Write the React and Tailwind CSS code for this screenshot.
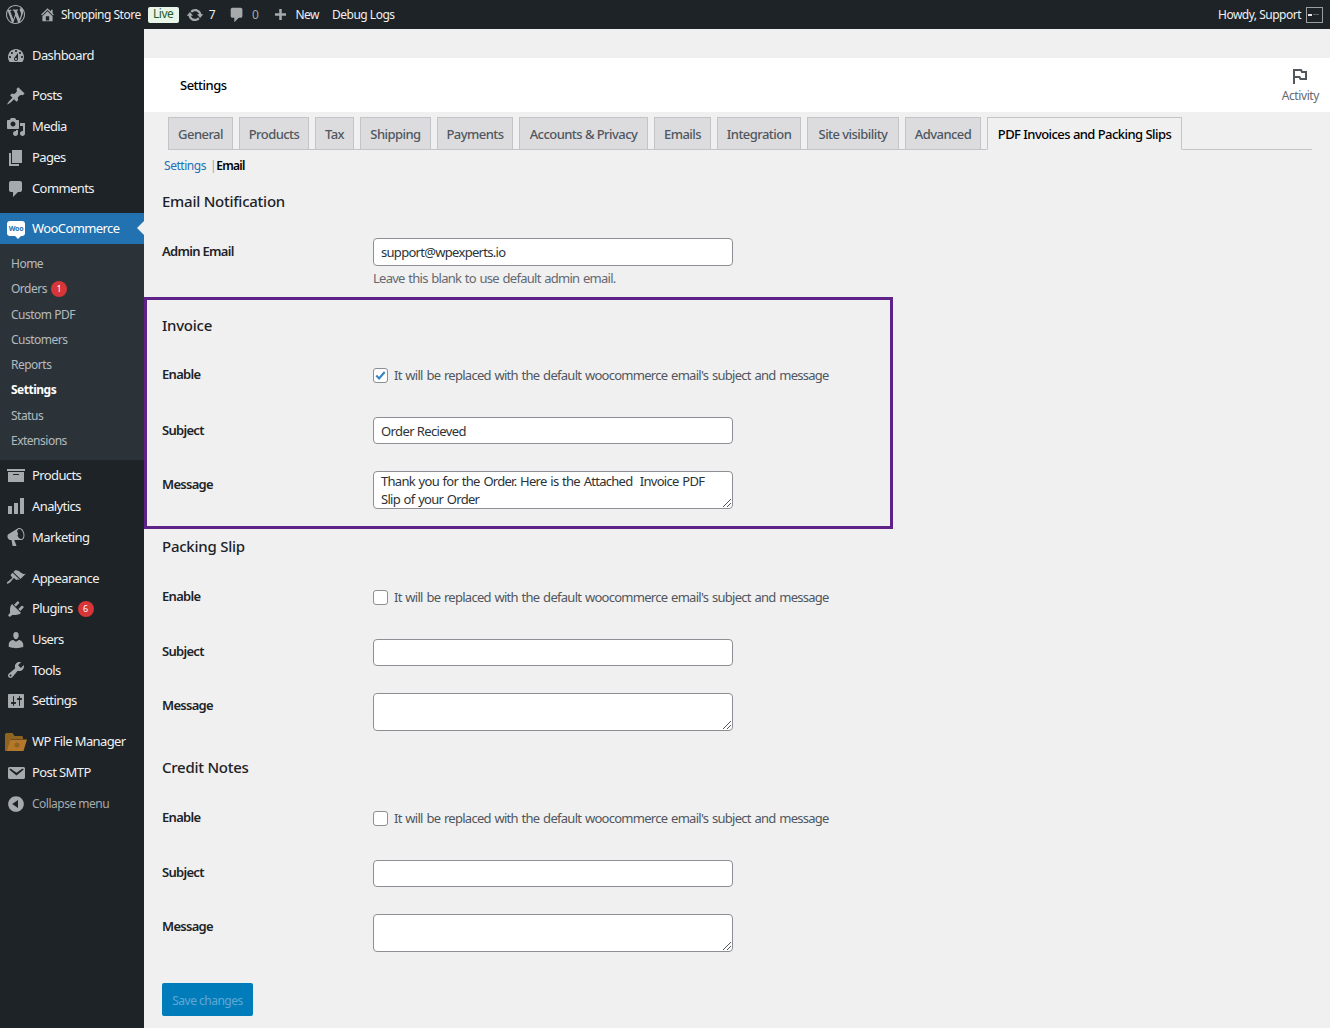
import React from 'react';

const PATHS = {
  wp: 'M20 10c0-5.51-4.49-10-10-10C4.48 0 0 4.49 0 10c0 5.52 4.48 10 10 10 5.51 0 10-4.48 10-10zM7.78 15.37L4.37 6.22c.55-.02 1.17-.08 1.17-.08.5-.06.44-1.13-.06-1.11 0 0-1.45.11-2.37.11-.18 0-.37 0-.58-.01C4.12 2.69 6.87 1.11 10 1.11c2.33 0 4.45.87 6.05 2.34-.68-.11-1.65.39-1.65 1.58 0 .74.45 1.36.9 2.1.35.61.55 1.36.55 2.46 0 1.49-1.4 5-1.4 5l-3.03-8.37c.54-.02.82-.17.82-.17.5-.05.44-1.25-.06-1.22 0 0-1.44.12-2.38.12-.87 0-2.33-.12-2.33-.12-.5-.03-.56 1.2-.06 1.22l.92.08 1.26 3.41zM17.41 10c.24-.64.74-1.87.43-4.25.7 1.29 1.05 2.71 1.05 4.25 0 3.29-1.73 6.24-4.4 7.78.97-2.59 1.94-5.2 2.92-7.78zM6.1 18.09C3.12 16.65 1.11 13.53 1.11 10c0-1.3.23-2.48.72-3.59C3.25 10.3 4.67 14.2 6.1 18.09zm4.03-6.63l2.58 6.98c-.86.29-1.76.45-2.71.45-.79 0-1.57-.11-2.29-.33.81-2.38 1.62-4.74 2.42-7.1z',
  home: 'M16 8.5l1.53 1.53-1.06 1.06L10 4.62l-6.47 6.47-1.06-1.06L10 2.5l4 4v-2h2v4zm-6-2.46l6 5.99V18H4v-5.97zM12 17v-5H8v5h4z',
  update: 'M10.2 3.28c3.53 0 6.43 2.61 6.92 6h2.08l-3.5 4-3.5-4h2.32c-.45-1.97-2.21-3.45-4.32-3.45-1.45 0-2.73.71-3.54 1.78L4.95 5.66C6.23 4.2 8.11 3.28 10.2 3.28zm-.4 13.44c-3.52 0-6.43-2.61-6.92-6H.8l3.5-4c1.17 1.33 2.33 2.67 3.5 4H5.48c.45 1.97 2.21 3.45 4.32 3.45 1.45 0 2.73-.71 3.54-1.78l1.71 1.95c-1.28 1.46-3.15 2.38-5.25 2.38z',
  comment: 'M5 2h9c1.1 0 2 .9 2 2v7c0 1.1-.9 2-2 2h-2l-5 5v-5H5c-1.1 0-2-.9-2-2V4c0-1.1.9-2 2-2z',
  plus: 'M8.5 3.500h3v5h5v3h-5v5h-3v-5h-5v-3h5z',
  dashboard: 'M3.76 16h12.48c1.1-1.37 1.76-3.11 1.76-5 0-4.42-3.58-8-8-8s-8 3.58-8 8c0 1.89.66 3.63 1.76 5zM10 4c.55 0 1 .45 1 1s-.45 1-1 1-1-.45-1-1 .45-1 1-1zM6 6c.55 0 1 .45 1 1s-.45 1-1 1-1-.45-1-1 .45-1 1-1zm8 0c.55 0 1 .45 1 1s-.45 1-1 1-1-.45-1-1 .45-1 1-1zm-5.37 5.55L12 7v6c0 1.1-.9 2-2 2s-2-.9-2-2c0-.57.24-1.08.63-1.45zM4 10c.55 0 1 .45 1 1s-.45 1-1 1-1-.45-1-1 .45-1 1-1zm12 0c.55 0 1 .45 1 1s-.45 1-1 1-1-.45-1-1 .45-1 1-1zm-5 3c0-.55-.45-1-1-1s-1 .45-1 1 .45 1 1 1 1-.45 1-1z',
  pin: 'M10.44 3.02l1.82-1.82 6.36 6.35-1.83 1.82c-1.05-.68-2.48-.57-3.41.36l-.75.75c-.92.93-1.04 2.35-.35 3.41l-1.83 1.82-2.41-2.41-2.8 2.79c-.42.42-3.38 2.71-3.8 2.29s1.86-3.39 2.28-3.81l2.79-2.79L4.1 9.36l1.83-1.82c1.05.69 2.48.57 3.4-.36l.75-.75c.93-.92 1.05-2.35.36-3.41z',
  media: 'M13 11V4c0-.55-.45-1-1-1h-1.67L9 1H5L3.67 3H2c-.55 0-1 .45-1 1v7c0 .55.45 1 1 1h10c.55 0 1-.45 1-1zM7 4.5c1.38 0 2.5 1.12 2.5 2.5S8.38 9.5 7 9.5 4.5 8.38 4.5 7 5.62 4.5 7 4.5zM14 6h5v10.5c0 1.38-1.12 2.5-2.5 2.5S14 17.88 14 16.5s1.12-2.5 2.5-2.5c.17 0 .34.02.5.05V9h-3V6zm-4 8.05V13h2v3.5c0 1.38-1.12 2.5-2.5 2.5S7 17.88 7 16.5 8.12 14 9.5 14c.17 0 .34.02.5.05z',
  page: 'M6 15V2h10v13H6zm-1 1h8v2H3V5h2v11z',
  archive: 'M19 4v2H1V4h18zM2 7h16v10H2V7zm11 3V9H7v1h6z',
  analytics: 'M18 18V2h-4v16h4zm-6 0V7H8v11h4zm-6 0v-8H2v8h4z',
  megaphone: 'M18.15 5.94c.46 1.62.38 3.22-.02 4.48-.42 1.28-1.26 2.18-2.3 2.48-.16.06-.26.06-.4.06-.06.02-.12.02-.18.02-.06.02-.14.02-.22.02h-6.8l2.22 5.5c.02.14-.06.26-.14.34-.08.1-.24.16-.34.16H6.95c-.1 0-.26-.06-.34-.16-.08-.08-.16-.2-.14-.34l-1-5.5H4.25l-.02-.02c-.5.06-1.08-.18-1.54-.62s-.88-1.08-1.06-1.88c-.24-.8-.2-1.56-.02-2.2.18-.62.58-1.08 1.06-1.3l.02-.02 9-5.4c.1-.06.18-.1.24-.16.06-.04.14-.08.24-.12.16-.08.28-.12.5-.18 1.04-.3 2.24.1 3.22.98s1.84 2.24 2.26 3.86zm-2.58 5.98h-.02c.4-.1.74-.34 1.04-.7.58-.7.86-1.76.86-3.04 0-.64-.1-1.3-.26-1.98-.34-1.36-1.02-2.5-1.78-3.24s-1.68-1.1-2.46-.88c-.82.22-1.4.96-1.7 2-.32 1.04-.28 2.36.06 3.72.38 1.36 1 2.6 1.8 3.32.8.74 1.64 1.02 2.46.8zm-4.28-6.8c.3.3.54.7.68 1.2.12.5.1.96-.02 1.36s-.4.7-.76.78c-.38.1-.76-.04-1.08-.34-.3-.3-.54-.7-.68-1.2-.12-.5-.1-.96.02-1.36.14-.4.4-.7.76-.78.38-.1.76.04 1.08.34z',
  appearance: 'M14.48 11.06L7.41 3.99l1.5-1.5c.5-.56 2.3-.47 3.51.32 1.21.8 1.43 1.28 2.91 2.1 1.18.64 2.45 1.26 4.45.85zm-.71.71L6.7 4.7 4.93 6.47c-.39.39-.39 1.02 0 1.41l1.06 1.06c.39.39.39 1.03 0 1.42-.6.6-1.43 1.11-2.21 1.69-.35.26-.7.53-1.01.84C1.43 13.23.4 14.81 1.08 15.5c.7.68 2.38-.56 3.61-1.73.31-.31.58-.66.84-1.01.58-.78 1.09-1.61 1.69-2.21.39-.39 1.02-.39 1.41 0l1.06 1.06c.39.39 1.02.39 1.41 0z',
  plugins: 'M13.11 4.36L9.87 7.6 8 5.73l3.24-3.24c.35-.34 1.05-.2 1.56.32.52.51.66 1.21.31 1.55zm-8 1.77l.91-1.12 9.01 9.01-1.19.84c-.71.71-2.63 1.16-3.82 1.16H6.14L4.9 17.26c-.59.59-1.54.59-2.12 0-.59-.58-.59-1.53 0-2.12l1.24-1.24v-3.88c0-1.13.4-3.19 1.09-3.89zm7.26 3.97l3.24-3.24c.34-.35 1.04-.21 1.55.31.52.51.66 1.21.31 1.55l-3.24 3.25z',
  users: 'M10 9.25c-2.27 0-2.73-3.44-2.73-3.44C7 4.02 7.82 2 9.97 2c2.16 0 2.98 2.02 2.71 3.81 0 0-.41 3.44-2.68 3.44zm0 2.57L12.72 10c2.39 0 4.52 2.33 4.52 4.53v2.49s-3.65 1.13-7.24 1.13c-3.65 0-7.24-1.13-7.24-1.13v-2.49c0-2.25 1.94-4.48 4.47-4.48z',
  tools: 'M16.68 9.77c-1.34 1.34-3.3 1.67-4.95.99l-5.41 6.52c-.99.99-2.59.99-3.58 0s-.99-2.59 0-3.57l6.52-5.42c-.68-1.65-.35-3.61.99-4.95 1.28-1.28 3.12-1.62 4.72-1.06l-2.89 2.89 2.82 2.82 2.86-2.87c.53 1.58.18 3.39-1.08 4.65zM3.81 16.21c.4.39 1.04.39 1.43 0 .4-.4.4-1.04 0-1.43-.39-.4-1.03-.4-1.43 0-.39.39-.39 1.03 0 1.43z',
  settings: 'M18 16V4c0-.55-.45-1-1-1H3c-.55 0-1 .45-1 1v12c0 .55.45 1 1 1h14c.55 0 1-.45 1-1zM8 11h1c.55 0 1 .45 1 1s-.45 1-1 1H8v1.5c0 .28-.22.5-.5.5s-.5-.22-.5-.5V13H6c-.55 0-1-.45-1-1s.45-1 1-1h1V5.5c0-.28.22-.5.5-.5s.5.22.5.5V11zm5-2h-1c-.55 0-1-.45-1-1s.45-1 1-1h1V5.5c0-.28.22-.5.5-.5s.5.22.5.5V7h1c.55 0 1 .45 1 1s-.45 1-1 1h-1v5.5c0 .28-.22.5-.5.5s-.5-.22-.5-.5V9z',
  email: 'M3.87 4h13.25C18.37 4 19 4.59 19 5.79v8.42c0 1.19-.63 1.79-1.88 1.79H3.87c-1.25 0-1.88-.6-1.88-1.79V5.79c0-1.2.63-1.79 1.88-1.79zm6.62 8.6l6.74-5.53c.24-.2.43-.66.13-1.07-.29-.41-.82-.42-1.17-.17l-5.7 3.86L4.8 5.83c-.35-.25-.88-.24-1.17.17-.3.41-.11.87.13 1.07z',
  collapse: 'M10 2.16c4.33 0 7.84 3.51 7.84 7.84s-3.51 7.84-7.84 7.84S2.16 14.33 2.16 10 5.71 2.16 10 2.16zm2 11.72V6.12L6.18 9.97z',
};

function Dash({ name, className }) {
  return (
    <svg viewBox="0 0 20 20" className={className} fill="currentColor">
      <path d={PATHS[name]} />
    </svg>
  );
}

function Badge({ n, className = 'ml-[5px]' }) {
  return (
    <span className={`${className} w-4 h-4 rounded-full bg-[#d63638] text-white text-[9px] leading-4 text-center tracking-normal`}>{n}</span>
  );
}

function MenuItem({ icon, label, badge, tight }) {
  return (
    <div className={`flex items-center ${tight ? 'h-[30.7px]' : 'h-[31px]'} text-[13px] text-[#f0f0f1]`}>
      <div className="w-8 flex justify-center shrink-0">
        <Dash name={icon} className="w-5 h-5 text-[#a7aaad]" />
      </div>
      <span className="tracking-[-0.6px]">{label}</span>
      {badge && <Badge n={badge} />}
    </div>
  );
}

function SubItem({ label, badge, active }) {
  return (
    <div className={`flex items-center h-[25.3px] pl-[11px] text-[12px] tracking-[-0.5px] ${active ? 'text-white font-bold' : 'text-[#f0f6fc]/70'}`}>
      <span>{label}</span>
      {badge && <Badge n={badge} className="ml-[4px]" />}
    </div>
  );
}

function WooIcon() {
  return (
    <div className="relative w-[18px] h-[15px] rounded-[3px] bg-white flex items-center justify-center">
      <span className="text-[7px] leading-none font-bold text-[#2271b1] tracking-[-0.3px]">Woo</span>
      <span className="absolute left-[8px] -bottom-[3px] w-0 h-0 border-l-[3px] border-r-[3px] border-t-[3px] border-l-transparent border-r-transparent border-t-white" />
    </div>
  );
}

function Sidebar() {
  return (
    <aside className="w-[144px] shrink-0 bg-[#1d2327] pt-[11px]">
      <MenuItem icon="dashboard" label="Dashboard" />
      <div className="h-[9px]" />
      <MenuItem icon="pin" label="Posts" />
      <MenuItem icon="media" label="Media" />
      <MenuItem icon="page" label="Pages" />
      <MenuItem icon="comment" label="Comments" />
      <div className="h-[9px]" />
      <div className="relative flex items-center h-[31px] bg-[#2271b1] text-white text-[13px]">
        <div className="w-8 flex justify-center shrink-0"><WooIcon /></div>
        <span className="tracking-[-0.6px]">WooCommerce</span>
        <span className="absolute right-0 top-[8px] w-0 h-0 border-y-[7px] border-r-[7px] border-y-transparent border-r-[#f0f0f1]" />
      </div>
      <div className="bg-[#2c3338] pt-[7.3px] pb-[6.3px]">
        <SubItem label="Home" />
        <SubItem label="Orders" badge="1" />
        <SubItem label="Custom PDF" />
        <SubItem label="Customers" />
        <SubItem label="Reports" />
        <SubItem label="Settings" active />
        <SubItem label="Status" />
        <SubItem label="Extensions" />
      </div>
      <MenuItem icon="archive" label="Products" />
      <MenuItem icon="analytics" label="Analytics" />
      <MenuItem icon="megaphone" label="Marketing" />
      <div className="h-[10px]" />
      <MenuItem tight icon="appearance" label="Appearance" />
      <MenuItem tight icon="plugins" label="Plugins" badge="6" />
      <MenuItem tight icon="users" label="Users" />
      <MenuItem tight icon="tools" label="Tools" />
      <MenuItem tight icon="settings" label="Settings" />
      <div className="h-[10.2px]" />
      <div className="flex items-center h-[31px] text-[13px] text-[#f0f0f1]">
        <div className="w-8 flex justify-center shrink-0">
          <svg viewBox="0 0 22 18" className="w-[22px] h-[18px]">
            <path d="M0 18V2C0 1 .7 0 1.500 0h6l2 3h7c.8 0 1.500.7 1.500 1.500V6H6L3 18z" fill="#8f6420" />
            <path d="M5.500 6.500H22L18.500 18H2z" fill="#b5782a" />
            <circle cx="12" cy="12" r="2.500" fill="#8f6420" />
          </svg>
        </div>
        <span className="tracking-[-0.6px]">WP File Manager</span>
      </div>
      <MenuItem icon="email" label="Post SMTP" />
      <div className="flex items-center h-[31px] text-[12px] text-[#a7aaad]">
        <div className="w-8 flex justify-center shrink-0">
          <Dash name="collapse" className="w-5 h-5 text-[#a7aaad]" />
        </div>
        <span className="tracking-[-0.5px]">Collapse menu</span>
      </div>
    </aside>
  );
}

function AdminBar() {
  return (
    <header className="flex items-center justify-between h-[29px] bg-[#1d2327] text-[#f0f0f1] text-[12px] tracking-[-0.5px]">
      <div className="flex items-center">
        <Dash name="wp" className="ml-[6px] w-[19px] h-[19px] text-[#a7aaad]" />
        <Dash name="home" className="ml-[14px] w-[17px] h-[17px] text-[#a7aaad]" />
        <span className="ml-[5px]">Shopping Store</span>
        <span className="ml-[7px] h-[16px] w-[31px] rounded-[2px] bg-[#e8f5e9] text-[#1e5c2a] text-[12px] leading-[14px] text-center">Live</span>
        <Dash name="update" className="ml-[7px] w-[18px] h-[18px] text-[#a7aaad]" />
        <span className="ml-[5px]">7</span>
        <Dash name="comment" className="ml-[13px] w-[18px] h-[18px] text-[#a7aaad]" />
        <span className="ml-[6px] text-[#a7aaad]">0</span>
        <Dash name="plus" className="ml-[14px] w-[17px] h-[17px] text-[#a7aaad]" />
        <span className="ml-[6px]">New</span>
        <span className="ml-[13px]">Debug Logs</span>
      </div>
      <div className="flex items-center pr-[7px]">
        <span>Howdy, Support</span>
        <div className="ml-[5px] w-[17px] h-[16px] border border-[#9b9ea1] bg-[#1d2327] flex items-center pl-[1px] gap-[1px]">
          <span className="w-[4px] h-[2px] bg-[#e5e5e5]" />
          <span className="w-[6px] h-[1px] bg-[#5c6166]" />
        </div>
      </div>
    </header>
  );
}

const TABS = [
  ['General', 'w-[65px]'],
  ['Products', 'w-[70px]'],
  ['Tax', 'w-[39px]'],
  ['Shipping', 'w-[71px]'],
  ['Payments', 'w-[76px]'],
  ['Accounts & Privacy', 'w-[129px]'],
  ['Emails', 'w-[57px]'],
  ['Integration', 'w-[84px]'],
  ['Site visibility', 'w-[92px]'],
  ['Advanced', 'w-[76px]'],
];

function Tabs() {
  return (
    <div className="mt-[5px] ml-[24px] mr-[18px] flex gap-[6px] h-[33px] border-b border-[#c3c4c7] text-[13px] font-medium tracking-[-0.55px]">
      {TABS.map(([label, width]) => (
        <div key={label} className={`${width} h-[33px] pt-[2px] flex items-center justify-center bg-[#dcdcde] border border-[#c3c4c7] text-[#50575e]`}>{label}</div>
      ))}
      <div className="w-[195px] h-[33px] pt-[2px] flex items-center justify-center bg-[#f0f0f1] border border-[#c3c4c7] border-b-[#f0f0f1] text-black">PDF Invoices and Packing Slips</div>
    </div>
  );
}

function Label({ children, className = '' }) {
  return <div className={`w-[211px] shrink-0 text-[13px] font-semibold text-[#1d2327] tracking-[-0.7px] ${className}`}>{children}</div>;
}

function EnableRow({ checked, className }) {
  return (
    <div className={`flex items-center h-[42px] ${className}`}>
      <Label>Enable</Label>
      <span className="w-[15px] h-[15px] mt-[1px] rounded-[3px] border border-[#8c8f94] bg-white flex items-center justify-center">
        {checked && (
          <svg viewBox="0 0 14 14" className="w-[13px] h-[13px] text-[#3582c4]" fill="none" stroke="currentColor" strokeWidth="2.200">
            <path d="M2.500 7l3 3.200 6-7" />
          </svg>
        )}
      </span>
      <span className="ml-[6px] mt-[3px] text-[13px] text-[#50575e] tracking-[-0.72px] [word-spacing:1px]">It will be replaced with the default woocommerce email's subject and message</span>
    </div>
  );
}

function TextBox({ value, className = 'h-[27px] leading-[27px] tracking-[-0.6px]' }) {
  return (
    <div className={`w-[360px] rounded-[4px] border border-[#8c8f94] bg-white px-[7px] text-[13px] text-[#2c3338] ${className}`}>{value}</div>
  );
}

function AreaBox({ lines }) {
  return (
    <div className="relative w-[360px] h-[38px] rounded-[4px] border border-[#8c8f94] bg-white px-[7px] text-[13px] leading-[18px] text-[#2c3338] tracking-[-0.72px] [word-spacing:1px] whitespace-pre">
      {lines && lines.map(l => <div key={l}>{l}</div>)}
      <svg viewBox="0 0 10 10" className="absolute right-0 bottom-0 w-[10px] h-[10px] text-[#555]" stroke="currentColor" fill="none">
        <path d="M1 9l8-8M5 9l4-4" />
      </svg>
    </div>
  );
}

function Heading({ children, className = '' }) {
  return <h2 className={`text-[15px] leading-[20px] pb-[2px] font-medium text-[#1d2327] tracking-[-0.25px] ${className}`}>{children}</h2>;
}

function EmailGroup({ checked, subject, lines, first }) {
  return (
    <>
      <EnableRow checked={checked} className={first ? 'mt-[17px]' : 'mt-[18px]'} />
      <div className="mt-[21px] flex items-center h-[27px]">
        <Label className={first ? 'mt-[2px]' : 'mt-0'}>Subject</Label>
        <TextBox value={subject} />
      </div>
      <div className="mt-[27px] flex items-start h-[38px]">
        <Label className={first ? 'mt-[4px]' : 'mt-[3px]'}>Message</Label>
        <AreaBox lines={lines} />
      </div>
    </>
  );
}

export default function App() {
  return (
    <div className="w-[1330px] h-[1028px] overflow-hidden bg-[#f0f0f1] font-['Noto_Sans',sans-serif] flex flex-col">
      <AdminBar />
      <div className="flex flex-1">
        <Sidebar />
        <main className="flex-1 min-w-0">
          <div className="mt-[29px] h-[54px] bg-white flex justify-between">
            <span className="ml-[36px] mt-[18px] text-[13px] font-medium text-black tracking-[-0.5px]">Settings</span>
            <div className="mr-[11px] pt-[11px] flex flex-col items-center text-[#646970] text-[12px] leading-4 tracking-[-0.4px]">
              <svg viewBox="0 0 14 15" className="w-[14px] h-[15px] text-[#50575e]" fill="none" stroke="currentColor" strokeWidth="2">
                <path d="M1 15V1h7l1 2h4v7H7.500l-1-2H1" />
              </svg>
              <span className="mt-[4px]">Activity</span>
            </div>
          </div>
          <Tabs />
          <div className="ml-[20px] mt-[7px] h-[17px] flex items-center text-[12px] tracking-[-0.45px]">
            <span className="text-[#2271b1]">Settings</span>
            <span className="ml-[4px] text-[#a8a29a]">|</span>
            <span className="ml-0 font-semibold text-black tracking-[-0.7px]">Email</span>
          </div>
          <div className="ml-[18px] mt-[17px]">
            <Heading>Email Notification</Heading>
            <div className="mt-[25px] flex items-center h-[28px]">
              <Label>Admin Email</Label>
              <TextBox value="support@wpexperts.io" className="h-[28px] leading-[26px] tracking-[-0.7px]" />
            </div>
            <div className="mt-[3px] ml-[211px] text-[13px] text-[#646970] tracking-[-0.74px] [word-spacing:1px]">Leave this blank to use default admin email.</div>
          </div>
          <section className="mt-[8px] w-[749px] h-[232px] border-[3px] border-[#5f2289] pl-[15px] pt-[15px]">
            <Heading>Invoice</Heading>
            <EmailGroup first checked subject="Order Recieved" lines={['Thank you for the Order. Here is the Attached  Invoice PDF', 'Slip of your Order']} />
          </section>
          <div className="ml-[18px] mt-[7px]">
            <Heading>Packing Slip</Heading>
            <EmailGroup />
            <Heading className="mt-[26px]">Credit Notes</Heading>
            <EmailGroup />
            <div className="mt-[31px] w-[91px] h-[33px] rounded-[2px] bg-[#007cba] text-[#62a8d4] text-[12px] tracking-[-0.5px] leading-[35px] text-center">Save changes</div>
          </div>
        </main>
      </div>
    </div>
  );
}
